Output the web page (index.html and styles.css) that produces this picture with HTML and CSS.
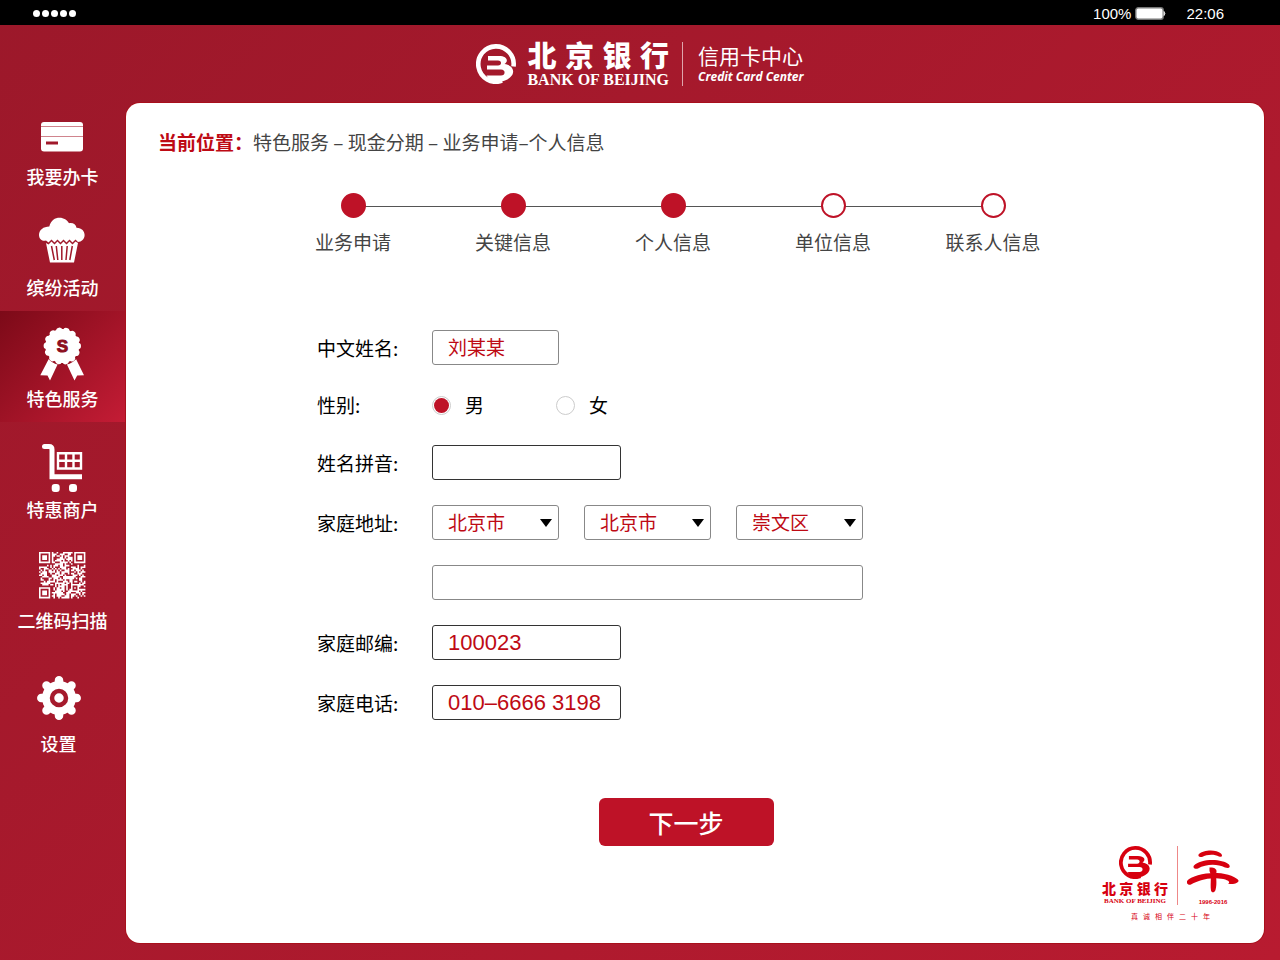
FILE: index.html
```html
<!DOCTYPE html>
<html lang="zh-CN">
<head>
<meta charset="utf-8">
<meta name="viewport" content="width=device-width, initial-scale=1">
<title>北京银行信用卡中心</title>
<link rel="stylesheet" href="styles.css">
</head>
<body>
<svg class="defs" width="0" height="0" aria-hidden="true">
  <symbol id="roundel" viewBox="0 0 40 40">
    <path d="M37.500 22.500A17.700 17.700 0 1 0 26 36.700" fill="none" stroke="currentColor" stroke-width="4.600"/>
    <path d="M12 12H23C31 12 33 17 28.500 20C38 21.500 39.500 29 34 33.500C29 38 21 39.500 14 36.500L10.500 31.500H25C29.500 31.500 30 25.500 25 25.500H11V21.500H22C26 21.500 26 16.500 22 16.500H12Z" fill="currentColor"/>
  </symbol>
</svg>

<div class="statusbar">
  <div class="signal" aria-label="信号"><i></i><i></i><i></i><i></i><i></i></div>
  <div class="status-right">
    <span>100%</span>
    <svg class="battery" viewBox="0 0 31 13" aria-hidden="true">
      <rect x=".8" y=".8" width="27.400" height="11.400" rx="2.500" fill="#fff" stroke="#777" stroke-width="1.400"/>
      <path d="M29 4.500q1.800 2 0 4z" fill="#ddd" stroke="#ddd"/>
    </svg>
    <time>22:06</time>
  </div>
</div>

<header class="header">
  <svg class="roundel" aria-hidden="true"><use href="#roundel"/></svg>
  <div class="bank">
    <span class="bank-cn"><b>北</b><b>京</b><b>银</b><b>行</b></span>
    <span class="bank-en">BANK OF BEIJING</span>
  </div>
  <div class="center">
    <span class="center-cn">信用卡中心</span>
    <span class="center-en">Credit Card Center</span>
  </div>
</header>

<div class="body">
  <nav class="sidebar">
    <a class="item" href="#card">
      <svg class="icon" viewBox="0 0 56 56" aria-hidden="true">
        <rect x="6" y="19" width="42" height="29.500" rx="3" fill="#fff"/>
        <path d="M6 23.500H48M6 33.500H48" stroke="#d0848d" stroke-width="1"/>
        <path d="M11 40H23" stroke="#a0182a" stroke-width="3"/>
      </svg>
      <span>我要办卡</span>
    </a>
    <a class="item" href="#events">
      <svg class="icon" viewBox="0 0 56 56" aria-hidden="true">
        <path d="M14.300 12.500C16 6 20 3.700 24.500 3.700S32 6 34 9.200C38 8.500 41 10.500 41.500 13.800C47 14 49.600 17.500 49.600 21C49.600 25 46.500 27.800 43 28L40.500 25.500L37.500 28.500L34.500 25.500L31.500 28.500L28.500 25.500L25.500 28.500L22.500 25.500L19.500 28.500L16.500 25.500L13.500 28.500L11 26.500C7 28 4 24.500 4 21C4 16 8.500 12.500 14.300 12.500Z" fill="#fff"/>
        <path d="M11 29L13.500 30.500L16.500 27.500L19.500 30.500L22.500 27.500L25.500 30.500L28.500 27.500L31.500 30.500L34.500 27.500L37.500 30.500L40.500 27.500L43 29L39 48.500H15Z" fill="#fff"/>
        <path d="M16.500 32L19.300 46M21.300 32L22.800 46M26.800 32V46M32.200 32L31 46M37.300 32L34.800 46" stroke="#a0182a" stroke-width="1.500"/>
      </svg>
      <span>缤纷活动</span>
    </a>
    <a class="item active" href="#service" aria-current="page">
      <svg class="icon" viewBox="0 0 56 56" aria-hidden="true">
        <path d="M13.700 34L23.500 37.500L15 55.500L12.500 50.500L5.300 50.300ZM41 34L31 37.500L39.500 55.500L42.200 50.500L49 50.300Z" fill="#fff"/>
        <circle cx="27.300" cy="21" r="17.500" fill="#fff" stroke="#980f20" stroke-width="3"/>
        <circle cx="27.300" cy="21" r="17" fill="#fff"/>
        <circle cx="27.300" cy="21" r="15.500" fill="none" stroke="#fff" stroke-width="6.400" stroke-linecap="round" stroke-dasharray="0.010 6.946"/>
        <text x="27.300" y="27" class="medal-letter">S</text>
      </svg>
      <span>特色服务</span>
    </a>
    <a class="item" href="#merchants">
      <svg class="icon" viewBox="0 0 56 56" aria-hidden="true">
        <path d="M9.500 10.500H14Q17 10.500 17 13.500V40.700H47" fill="none" stroke="#fff" stroke-width="5"/>
        <circle cx="9.500" cy="10.500" r="2.500" fill="#fff"/>
        <path d="M23 17.200H46V32.500H23ZM31 17V32M38.500 17V32M23 24.800H46" fill="none" stroke="#fff" stroke-width="2.400"/>
        <rect x="16.700" y="48" width="8" height="8" rx="3" fill="#fff"/>
        <rect x="34" y="48" width="8" height="8" rx="3" fill="#fff"/>
      </svg>
      <span>特惠商户</span>
    </a>
    <a class="item" href="#scan">
      <svg class="icon" viewBox="0 0 56 56" aria-hidden="true">
        <path id="qr" transform="translate(4 5) scale(1.600)" fill="#fff"/>
      </svg>
      <span>二维码扫描</span>
    </a>
    <a class="item settings" href="#settings">
      <svg class="icon" viewBox="0 0 56 56" aria-hidden="true">
        <path d="M28 10.300V45.700M10.300 28H45.700M15.500 15.500L40.500 40.500M40.500 15.500L15.500 40.500" stroke="#fff" stroke-width="8.500" stroke-linecap="round"/>
        <circle cx="28" cy="28" r="17" fill="#fff"/>
        <circle cx="28" cy="28" r="7" fill="#fff" stroke="#a51a2c" stroke-width="4.500"/>
      </svg>
      <span>设置</span>
    </a>
  </nav>

  <main class="card">
    <p class="crumbs"><strong>当前位置：</strong>特色服务 – 现金分期 – 业务申请–个人信息</p>

    <ol class="steps">
      <li class="done">业务申请</li>
      <li class="done">关键信息</li>
      <li class="done">个人信息</li>
      <li>单位信息</li>
      <li>联系人信息</li>
    </ol>

    <form class="form" action="#">
      <div class="row">
        <label for="name">中文姓名:</label>
        <input id="name" class="field short soft" type="text" value="刘某某">
      </div>
      <div class="row radios" role="radiogroup" aria-labelledby="sex">
        <span id="sex" class="caption">性别:</span>
        <label class="choice"><input type="radio" name="sex" checked>男</label>
        <label class="choice"><input type="radio" name="sex">女</label>
      </div>
      <div class="row">
        <label for="pinyin">姓名拼音:</label>
        <input id="pinyin" class="field medium" type="text">
      </div>
      <div class="row">
        <label for="province">家庭地址:</label>
        <div class="selects">
          <div class="select"><select id="province" class="field short soft"><option>北京市</option></select></div>
          <div class="select"><select class="field short soft" aria-label="城市"><option>北京市</option></select></div>
          <div class="select"><select class="field short soft" aria-label="区县"><option>崇文区</option></select></div>
        </div>
      </div>
      <div class="row">
        <span class="caption"></span>
        <input class="field long soft" type="text" aria-label="详细地址">
      </div>
      <div class="row">
        <label for="zip">家庭邮编:</label>
        <input id="zip" class="field medium number" type="text" value="100023">
      </div>
      <div class="row">
        <label for="phone">家庭电话:</label>
        <input id="phone" class="field medium number" type="text" value="010–6666 3198">
      </div>
      <button class="next" type="submit">下一步</button>
    </form>

    <footer class="anniversary">
      <div class="marks">
        <div class="mark bank-mark">
          <svg class="roundel-small" aria-hidden="true"><use href="#roundel"/></svg>
          <span class="small-cn"><b>北</b><b>京</b><b>银</b><b>行</b></span>
          <span class="small-en">BANK OF BEIJING</span>
        </div>
        <div class="mark years">
          <svg class="twenty" viewBox="0 0 52 44" aria-hidden="true">
            <path d="M12 5C16 1 29 0 34 4.500C36 7 35 8.500 32 7.500C27 5 20 5.500 15 8C12 8.500 10.500 6.500 12 5Z"/>
            <path d="M7 16.500C13 9.500 35 9 42 15.500C44 18.500 42 19.500 38 18.500C30 14.500 19 15 11 19.500C7.500 20.500 5.500 18.500 7 16.500Z"/>
            <path d="M0 32C4 27 18 23.500 30 24C41 24.500 50 28.500 51.500 31.500C52 34 46 36 41 34.500C45 32.500 38 29.500 29 29.300C18 29 10 32.500 4 35.500C1 36.500-1 34 0 32Z"/>
            <path d="M22.500 18.500C26 18 30 19.500 29.500 22.500C28.500 29 30.500 34 28.500 41C27.500 44 24.500 44 24 41.500C23 34 25 27 22.500 22Z"/>
          </svg>
          <span class="range">1996-2016</span>
        </div>
      </div>
      <div class="motto"><span>真</span><span>诚</span><span>相</span><span>伴</span><span>二</span><span>十</span><span>年</span></div>
    </footer>
  </main>
</div>
<script src="qr.js"></script>
</body>
</html>
```

FILE: styles.css
```css
*,
*::before,
*::after {
  box-sizing: border-box;
}

body {
  margin: 0;
  min-height: 100vh;
  display: flex;
  flex-direction: column;
  background: linear-gradient(135deg, #9c182a, #b81b30);
  color: #000;
  font-family: "Noto Sans CJK SC", "Noto Sans", sans-serif;
  font-size: 19px;
  line-height: 24px;
}

.defs {
  position: absolute;
}

/* Status bar */
.statusbar {
  display: flex;
  justify-content: space-between;
  align-items: center;
  height: 25px;
  padding: 2px 56px 0 33px;
  background: #000;
  color: #fff;
  font: 15px/20px "Liberation Sans", Arial, sans-serif;
}

.signal {
  display: flex;
  gap: 2px;
}

.signal i {
  width: 7px;
  height: 7px;
  border-radius: 50%;
  background: #fff;
}

.status-right {
  display: flex;
  align-items: center;
  gap: 4px;
}

.battery {
  width: 31px;
  height: 13px;
}

.status-right time {
  margin-left: 16px;
}

/* Header */
.header {
  display: flex;
  justify-content: center;
  align-items: center;
  height: 64px;
  padding-top: 14px;
  color: #fff;
}

.roundel {
  width: 40px;
  height: 40px;
  margin-right: 11px;
}

.bank,
.center {
  display: flex;
  flex-direction: column;
}

.bank-cn,
.small-cn {
  display: flex;
  justify-content: space-between;
}

.bank-cn b,
.small-cn b {
  font-weight: 900;
}

.bank-cn {
  font-size: 29px;
  line-height: 26px;
}

.bank-en {
  padding-top: 5px;
  font: bold 16px/15px "Liberation Serif", "Times New Roman", serif;
}

.center {
  margin-left: 13px;
  padding: 1px 0 2px 15px;
  border-left: 1px solid #dfa5ac;
}

.center-cn {
  font-size: 21px;
  line-height: 24px;
}

.center-en {
  padding-top: 2px;
  font: italic bold 12px/15px "Open Sans", "Noto Sans", sans-serif;
}

/* Layout below the header */
.body {
  flex: 1;
  display: flex;
}

.sidebar {
  width: 126px;
  flex: none;
  padding-right: 1px;
}

.item {
  display: flex;
  flex-direction: column;
  align-items: center;
  gap: 5px;
  padding: 14px 0 12px;
  color: #fff;
  font-size: 18px;
  font-weight: 500;
  text-decoration: none;
}

.item.active {
  background: linear-gradient(135deg, #7c0a18, #c41c35);
}

.item.settings {
  margin-top: 12px;
  padding-right: 8px;
}

.icon {
  width: 56px;
  height: 56px;
}

.medal-letter {
  fill: #8c0f1f;
  stroke: #8c0f1f;
  font: bold 17px "Liberation Sans", Arial, sans-serif;
  text-anchor: middle;
}

.card {
  flex: 1;
  min-width: 0;
  display: flex;
  flex-direction: column;
  margin: 14px 16px 17px 0;
  border-radius: 14px;
  background: #fff;
  box-shadow: 0 0 0 1px #a8101c;
}

.crumbs {
  margin: 27px 32px 0;
  color: #444;
}

.crumbs strong {
  color: #be0a14;
}

/* Progress steps */
.steps {
  display: flex;
  margin: 39px 191px 0 147px;
  padding: 0;
  list-style: none;
  color: #444;
}

.steps li {
  position: relative;
  flex: 1;
  display: flex;
  flex-direction: column;
  align-items: center;
  gap: 12px;
  white-space: nowrap;
}

.steps li::before {
  content: "";
  z-index: 1;
  width: 25px;
  height: 25px;
  border: 2px solid #be1227;
  border-radius: 50%;
  background: #fff;
}

.steps li.done::before {
  background: #be1227;
}

.steps li + li::after {
  content: "";
  position: absolute;
  top: 13px;
  right: 50%;
  width: 100%;
  height: 1px;
  background: #555;
}

/* Form */
.form {
  display: flex;
  flex-direction: column;
  gap: 25px;
  margin: 76px 191px 0;
}

.row {
  display: flex;
  align-items: center;
  min-height: 30px;
}

.row > label[for],
.caption {
  flex: none;
  width: 115px;
}

.field {
  height: 35px;
  padding: 0 15px 2px;
  border: 1px solid #333;
  border-radius: 3px;
  background: #fff;
  color: #be0a14;
  font: 19px "Noto Sans CJK SC", sans-serif;
}

.soft {
  border-color: #888;
}

.short {
  width: 127px;
}

.medium {
  width: 189px;
}

.long {
  width: 431px;
}

.number {
  padding-bottom: 0;
  font: 22px "Liberation Sans", Arial, sans-serif;
}

.selects {
  display: flex;
  gap: 25px;
}

.select {
  position: relative;
}

.select select {
  display: block;
  appearance: none;
}

.select::after {
  content: "";
  position: absolute;
  top: 14px;
  right: 7px;
  border: 6px solid transparent;
  border-top: 8px solid #000;
  border-bottom: 0;
  pointer-events: none;
}

.choice {
  display: flex;
  align-items: center;
  gap: 14px;
  width: 124px;
}

.choice input {
  appearance: none;
  width: 19px;
  height: 19px;
  margin: 0;
  border: 1px solid #ccc;
  border-radius: 50%;
  background: #fff;
}

.choice input:checked {
  background: #be1227;
  background-clip: content-box;
  padding: 1px;
}

.next {
  align-self: center;
  width: 175px;
  height: 48px;
  margin: 53px 18px 0 0;
  padding: 0;
  border: 0;
  border-radius: 6px;
  background: #be1227;
  color: #fff;
  font: 500 25px/48px "Noto Sans CJK SC", sans-serif;
}

/* Anniversary mark */
.anniversary {
  align-self: flex-end;
  display: flex;
  flex-direction: column;
  align-items: center;
  gap: 6px;
  margin: auto 25px 22px 0;
  color: #d7000f;
}

.marks {
  display: flex;
}

.mark {
  display: flex;
  flex-direction: column;
  align-items: center;
}

.bank-mark {
  width: 75px;
  padding-right: 9px;
}

.roundel-small {
  width: 33px;
  height: 33px;
  margin-bottom: 2px;
}

.small-cn {
  align-self: stretch;
  font-size: 14px;
  line-height: 14px;
}

.small-en {
  padding-top: 3px;
  font: bold 7px/7px "Liberation Serif", "Times New Roman", serif;
}

.years {
  justify-content: flex-end;
  gap: 6px;
  padding-left: 9px;
  border-left: 1px solid #e88;
}

.twenty {
  width: 52px;
  height: 44px;
  fill: currentColor;
}

.range {
  font: bold 6px/6px "Liberation Sans", Arial, sans-serif;
}

.motto {
  display: flex;
  gap: 5px;
  font-size: 7px;
  line-height: 10px;
}
```

FILE: qr.js
```js
// Builds the QR glyph of the scan entry: 29 x 29 modules with three finders
// and one alignment square.
(function () {
  var size = 29;
  var seed = 77;
  var d = "";

  function random() {
    seed = (seed * 1103515245 + 12345) % 2147483648;
    return seed / 2147483648;
  }

  function ring(x, y, cx, cy, outer) {
    var r = Math.max(Math.abs(x - cx), Math.abs(y - cy));
    if (r > outer + 1) return null;
    if (outer === 3) return r === 3 || r < 2;
    return r > outer ? null : r !== 1;
  }

  for (var y = 0; y < size; y++) {
    for (var x = 0; x < size; x++) {
      var noise = random() < 0.54;
      var on = [ring(x, y, 3, 3, 3), ring(x, y, 25, 3, 3),
                ring(x, y, 3, 25, 3), ring(x, y, 22, 22, 2)]
        .find(function (v) { return v !== null; });
      if (on === undefined) on = noise;
      if (on) d += "M" + x + " " + y + "h1v1h-1z";
    }
  }
  document.getElementById("qr").setAttribute("d", d);
})();
```
